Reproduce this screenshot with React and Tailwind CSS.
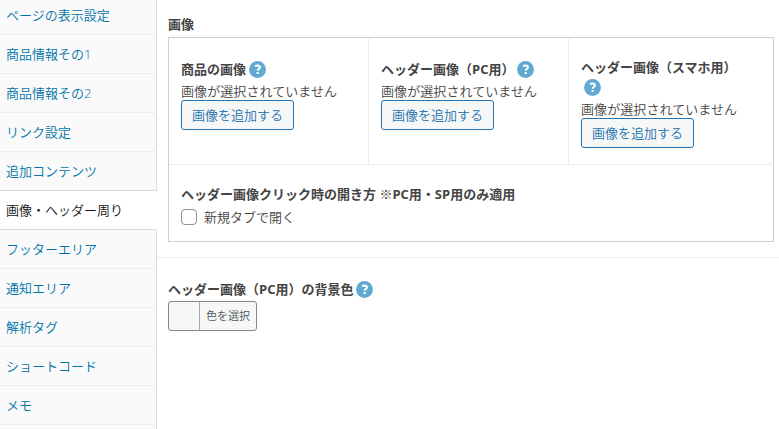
import clsx from "clsx";

const tabs = [
  "ページの表示設定",
  "商品情報その1",
  "商品情報その2",
  "リンク設定",
  "追加コンテンツ",
  "画像・ヘッダー周り",
  "フッターエリア",
  "通知エリア",
  "解析タグ",
  "ショートコード",
  "メモ",
  "",
];

const ACTIVE_TAB = 5;

function HelpTip({ className }) {
  return (
    <svg
      viewBox="0 0 17 17"
      className={clsx("size-[17px] shrink-0", className)}
      aria-label="help"
    >
      <circle cx="8.5" cy="8.5" r="8.4" fill="#5fa9d2" />
      <path
        d="M6.2 5.5C6.7 4.8 7.5 4.5 8.5 4.5c1.5 0 2.4.7 2.4 1.8 0 1.6-2.2 1.5-2.2 3.4"
        fill="none"
        stroke="#fff"
        strokeWidth="2"
      />
      <rect x="7.6" y="11" width="2.1" height="2" fill="#fff" />
    </svg>
  );
}

function Sidebar() {
  return (
    <ul className="-mt-1 w-[157px] shrink-0">
      {tabs.map((label, i) => (
        <li
          key={i}
          className={clsx(
            "flex h-[39px] items-center border-b pb-px pl-1.5 whitespace-nowrap",
            i === ACTIVE_TAB
              ? "border-b-[#dcdcdc] bg-white text-[#111]"
              : "border-r border-r-[#dcdcdc] bg-[#fafafa] text-[#0073aa]",
            i === ACTIVE_TAB - 1 && "border-b-[#dcdcdc]",
            i !== ACTIVE_TAB && i !== ACTIVE_TAB - 1 && "border-b-[#eee]"
          )}
        >
          {label}
        </li>
      ))}
    </ul>
  );
}

function ImageField({ label, wrap, className }) {
  return (
    <div className={clsx("h-[126px] pl-3", className)}>
      <div
        className={clsx(
          "flex h-[18px] items-center font-bold whitespace-nowrap",
          wrap ? "mt-5" : "mt-[22px]"
        )}
      >
        {label}
        {!wrap && <HelpTip className="ml-[3px]" />}
      </div>
      {wrap && <HelpTip className="ml-[3px] mt-[3px]" />}
      <div className="h-[22px] leading-[26px] tracking-[0.08px]">画像が選択されていません</div>
      <button className="flex h-[30px] w-[113px] items-center justify-center rounded-[3px] border border-[#2271b1] bg-[#f6f7f7] text-[#2271b1]">
        画像を追加する
      </button>
    </div>
  );
}

function App() {
  return (
    <div className="flex h-[429px] w-[779px] overflow-hidden bg-white font-['Open_Sans','Noto_Sans_CJK_JP',sans-serif] text-[13px] leading-[18px] font-[350] text-[#444]">
      <Sidebar />

      <main className="min-w-0 flex-1">
        <section className="h-[258px] border-b border-[#eee] pl-[11px] pt-[15px]">
          <h2 className="h-[22px] font-bold">画像</h2>

          <div className="h-[205px] w-[606px] border border-[#ccd0d4]">
            <div className="grid h-[127px] grid-cols-[200px_200px_204px] border-b border-[#eee]">
              <ImageField label="商品の画像" />
              <ImageField label="ヘッダー画像（PC用）" className="-ml-px border-l border-[#eee]" />
              <ImageField label="ヘッダー画像（スマホ用）" wrap className="-ml-px border-l border-[#eee]" />
            </div>

            <div className="pl-3 pt-5">
              <div className="font-bold">ヘッダー画像クリック時の開き方 ※PC用・SP用のみ適用</div>
              <label className="mt-1.5 flex h-4 items-center gap-[7px]">
                <input
                  type="checkbox"
                  className="size-4 appearance-none rounded-sm border border-[#8c8f94] bg-white"
                />
                新規タブで開く
              </label>
            </div>
          </div>
        </section>

        <section className="pl-[11px] pt-[22px]">
          <div className="flex h-[18px] items-center font-bold">
            ヘッダー画像（PC用）の背景色
            <HelpTip className="ml-[3px]" />
          </div>
          <button className="mt-[3px] flex h-[30px] w-[89px] overflow-hidden rounded-[3px] border border-[#7e8993] bg-[#f6f7f7] text-[11px] text-[#50575e]">
            <span className="h-full w-[31px] border-r border-[#a7aaad]" />
            <span className="flex-1 text-center leading-7">色を選択</span>
          </button>
        </section>
      </main>
    </div>
  );
}

export default App;
